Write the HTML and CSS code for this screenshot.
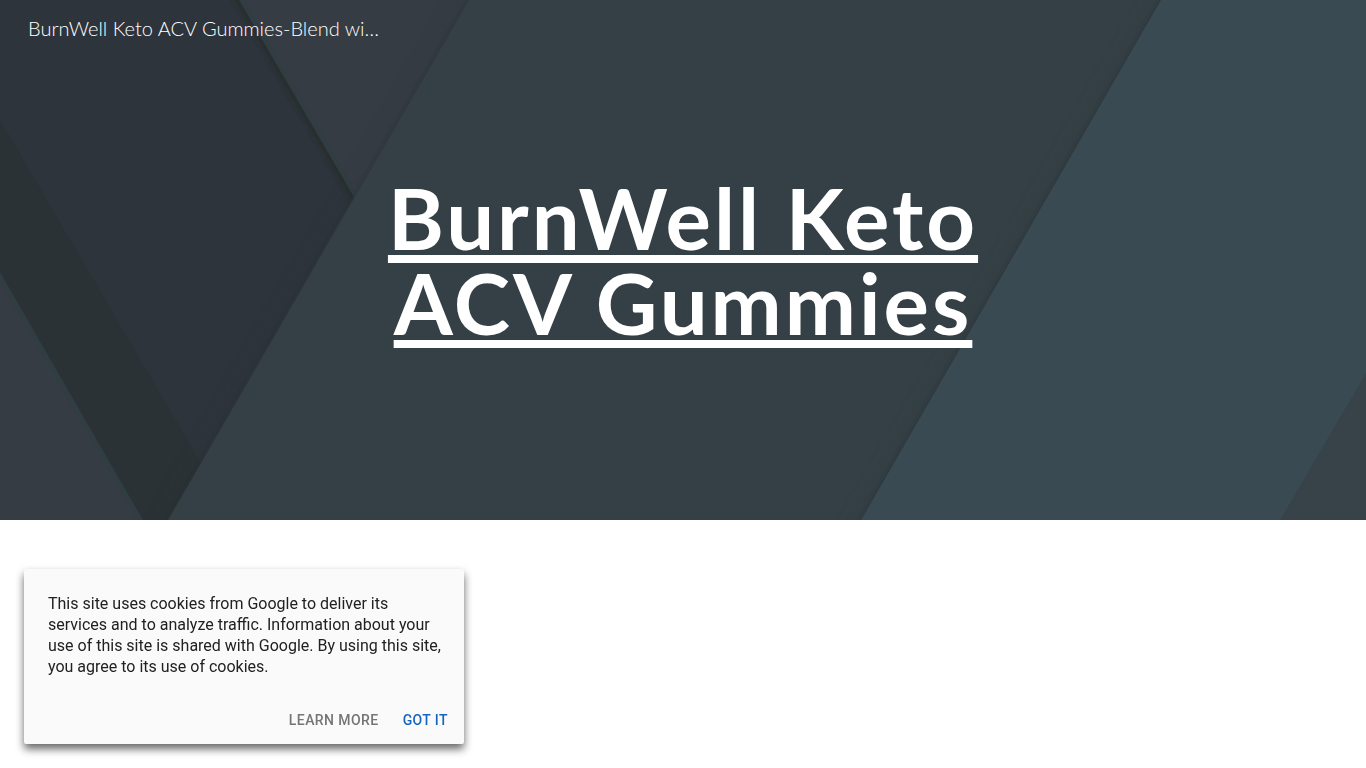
FILE: index.html
```html
<!DOCTYPE html>
<html lang="en">
<head>
    <meta charset="UTF-8">
    <meta name="viewport" content="width=device-width, initial-scale=1.0">
    <title>BurnWell Keto ACV Gummies</title>
    <link rel="stylesheet" href="styles.css">
</head>
<body>
    <header class="hero">
        <!-- Layered paper background -->
        <svg class="hero-bg" viewBox="0 0 1366 520" preserveAspectRatio="xMidYMid slice" aria-hidden="true">
            <defs>
                <filter id="wide" x="-20%" y="-20%" width="140%" height="140%"><feGaussianBlur stdDeviation="12"/></filter>
                <filter id="thin" x="-20%" y="-20%" width="140%" height="140%"><feGaussianBlur stdDeviation="2"/></filter>
                <clipPath id="leftPanel"><path d="M-40-69V520H168L354 197 239 0 199-69z"/></clipPath>
            </defs>
            <rect x="-40" y="-40" width="1446" height="600" fill="#353c43"/>
            <g clip-path="url(#leftPanel)">
                <rect x="-40" y="-40" width="520" height="600" fill="#2d343b"/>
                <path d="M199-69L239 0 354 197" fill="none" stroke="#272d2f" stroke-width="8" filter="url(#thin)"/>
                <path d="M-40 52L0 120 234 520H-40z" fill="#2a3235"/>
                <path d="M-40 203L0 272 143 520 166 560H-40z" fill="#353c43"/>
                <path d="M-40 203L0 272 143 520" fill="none" stroke="#303d43" stroke-width="4" transform="translate(-3 0)"/>
            </g>
            <path d="M239 0L354 197" fill="none" stroke="#303d43" stroke-width="3" transform="translate(3 0)"/>
            <path d="M492-40L145 560H1000L1200-40z" fill="#2a3032" opacity=".25" filter="url(#wide)"/>
            <path d="M492-40L145 560H1000L1200-40z" fill="#282e30" opacity=".5" filter="url(#thin)"/>
            <path d="M492-40L145 560H1000L1200-40z" fill="#344045"/>
            <path d="M1184-40L838 560H1406V-40z" fill="#303638" opacity=".2" filter="url(#wide)"/>
            <path d="M1184-40L838 560H1406V-40z" fill="#2c3234" opacity=".9" filter="url(#thin)"/>
            <path d="M1184-40L838 560H1406V-40z" fill="#394a52"/>
            <path d="M1406 305L1366 373 1280 520 1257 560H1406z" fill="#374349"/>
        </svg>
        <a class="site-name" href="#">BurnWell Keto ACV Gummies-Blend wi…</a>
        <h1 class="hero-title"><a href="#">BurnWell Keto ACV Gummies</a></h1>
    </header>

    <div class="cookie-bar" role="dialog" aria-label="Cookies">
        <p>This site uses cookies from Google to deliver its services and to analyze traffic. Information about your use of this site is shared with Google. By using this site, you agree to its use of cookies.</p>
        <div class="cookie-actions">
            <a class="cookie-btn" href="#">LEARN MORE</a>
            <button class="cookie-btn cookie-accept" type="button">GOT IT</button>
        </div>
    </div>
</body>
</html>
```
FILE: styles.css
```css
* {
    box-sizing: border-box;
}

body {
    margin: 0;
    background: #fff;
    font-family: Lato, sans-serif;
}

.hero {
    position: relative;
    min-height: 520px;
    background: #344045;
    color: #fff;
    overflow: hidden;
}

/* Background sits under the header text */
.hero-bg {
    position: absolute;
    inset: 0;
    width: 100%;
    height: 100%;
}

.site-name {
    position: relative;
    display: block;
    padding: 16px 28px;
    font-size: 20px;
    font-weight: 300;
    line-height: 24px;
    color: #fff;
    text-decoration: none;
}

.hero-title {
    position: relative;
    max-width: 720px;
    margin: 0 auto;
    padding: 119px 48px;
    font-size: 85px;
    font-weight: 700;
    letter-spacing: 3px;
    line-height: 85px;
    text-align: center;
}

.hero-title a {
    color: #fff;
    text-decoration: underline;
}

/* Cookie notice floats over the page */
.cookie-bar {
    position: fixed;
    left: 24px;
    bottom: 24px;
    width: 440px;
    max-width: calc(100% - 48px);
    padding: 24px 8px 8px 24px;
    background: #fafafa;
    border-radius: 2px;
    box-shadow: 0 5px 8px rgba(0, 0, 0, 0.6);
    font-family: Roboto, sans-serif;
    color: #212121;
}

.cookie-bar p {
    margin: 0 8px 27px 0;
    font-size: 16px;
    line-height: 21px;
}

.cookie-actions {
    display: flex;
    justify-content: flex-end;
    gap: 8px;
}

.cookie-btn {
    padding: 0 8px;
    border: 0;
    background: none;
    font-family: inherit;
    font-size: 14px;
    font-weight: 500;
    letter-spacing: 0.03em;
    line-height: 32px;
    color: #757575;
    text-decoration: none;
    cursor: pointer;
}

.cookie-accept {
    color: #1565c0;
}
```
